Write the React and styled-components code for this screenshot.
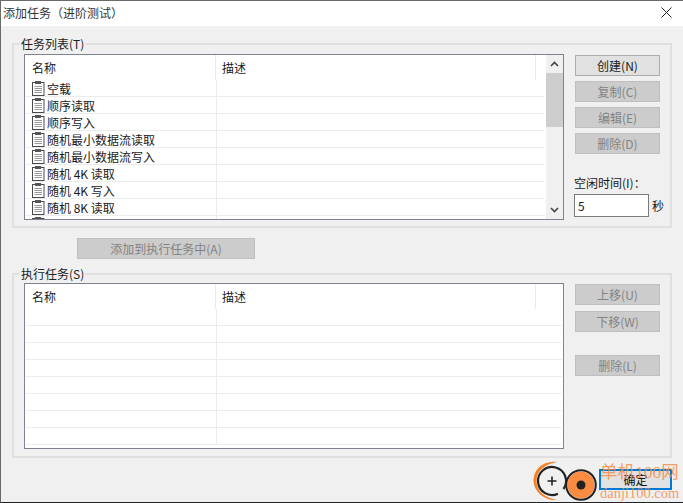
import React from "react";
import styled, { createGlobalStyle } from "styled-components";

const Global = createGlobalStyle`
  html, body { margin: 0; padding: 0; background: #f0f0f0; }
  * { box-sizing: border-box; }
`;

const Dialog = styled.div`
  position: relative;
  width: 683px;
  height: 503px;
  overflow: hidden;
  display: flex;
  flex-direction: column;
  background: #f0f0f0;
  border-top: 1px solid #6a6a6a;
  border-left: 1px solid #6a6a6a;
  border-bottom: 1px solid #222;
  font: 12px/16px "Noto Sans CJK SC", "Liberation Sans", sans-serif;
  color: #1a1a1a;
`;

const TitleBar = styled.div`
  height: 25px;
  flex: none;
  display: flex;
  align-items: center;
  justify-content: space-between;
  padding: 0 11px 2px 2px;
  background: #fff;
  color: #333;
`;

const Body = styled.div`
  flex: 1;
  display: flex;
  flex-direction: column;
  padding: 17px 11px 0 11px;
`;

const Group = styled.section`
  position: relative;
  height: 185px;
  flex: none;
  padding: ${(p) => p.$top}px 0 0 10px;
  border: 2px solid #e0e0e0;
  display: flex;
  gap: 11px;
`;

const Legend = styled.div`
  position: absolute;
  left: 6px;
  top: -9px;
  padding: 0 1px;
  height: 16px;
  background: #f0f0f0;
  color: #222;
`;

const ListBox = styled.div`
  width: 540px;
  height: 166px;
  flex: none;
  display: flex;
  background: #fff;
  border: 1px solid #7f8391;
  overflow: hidden;
`;

const Table = styled.div`
  flex: 1;
  min-width: 0;
  display: flex;
  flex-direction: column;
`;

const HeaderRow = styled.div`
  height: 25px;
  flex: none;
  display: grid;
  grid-template-columns: 191px 320px 1fr;
  line-height: 26px;
`;

const HeaderCell = styled.div`
  padding-left: 7px;
  border-right: 1px solid #eaeaea;
  height: 25px;

  & + & {
    padding-left: 6px;
  }
`;

const Row = styled.div`
  height: 17px;
  flex: none;
  display: grid;
  grid-template-columns: 191px 1fr;
  border-bottom: 1px solid #ececec;
  margin: 0 ${(p) => (p.$wide ? 2 : 1)}px 0 1px;
`;

const NameCell = styled.div`
  display: flex;
  align-items: center;
  gap: 1px;
  padding: 1px 0 0 6px;
  height: 16px;
  border-right: 1px solid #ececec;
  white-space: pre;
`;

const ClipIcon = styled.svg`
  width: 14px;
  height: 15px;
  flex: none;
  margin-top: -1px;
`;

const Scrollbar = styled.div`
  width: 17px;
  flex: none;
  display: flex;
  flex-direction: column;
  background: #f0f0f0;
`;

const ArrowBox = styled.div`
  height: 18px;
  flex: none;
  display: flex;
  align-items: center;
  justify-content: center;
`;

const Thumb = styled.div`
  height: 54px;
  flex: none;
  background: #cdcdcd;
`;

const Spacer = styled.div`
  flex: 1;
`;

const Side = styled.div`
  width: 85px;
  flex: none;
  margin-top: 1px;
  display: flex;
  flex-direction: column;
`;

const Button = styled.button`
  width: ${(p) => p.$w || 85}px;
  height: 21px;
  flex: none;
  padding: 0;
  margin: 0 0 ${(p) => p.$mb ?? 5}px;
  font: inherit;
  line-height: 17px;
  background: ${(p) => (p.disabled ? "#cccccc" : "#e1e1e1")};
  border: 1px solid ${(p) => (p.disabled ? "#bfbfbf" : "#adadad")};
  color: ${(p) => (p.disabled ? "#838383" : "#1a1a1a")};
`;

const IdleLabel = styled.div`
  margin: 16px 0 0 -1px;
  height: 16px;
  white-space: nowrap;
`;

const IdleRow = styled.div`
  display: flex;
  align-items: center;
  gap: 3px;
  margin: 3px 0 0 -1px;
  white-space: nowrap;
`;

const Input = styled.div`
  width: 75px;
  height: 23px;
  background: #fff;
  border: 1px solid #7a7a7a;
  padding: 3px 0 0 3px;
  flex: none;
`;

const AddRow = styled.div`
  height: 45px;
  flex: none;
  padding: 10px 0 0 65px;
`;

const Footer = styled.div`
  flex: 1;
  display: flex;
  justify-content: flex-end;
  padding: 11px 0 0;
`;

const OkButton = styled.button`
  width: 73px;
  height: 21px;
  padding: 0;
  font: inherit;
  line-height: 15px;
  background: #e1e1e1;
  border: 2px solid #0078d7;
  color: #111;
`;

const Watermark = styled.div`
  position: absolute;
  right: 3px;
  top: 462px;
  width: 80px;
  display: flex;
  flex-direction: column;
  gap: 5px;
  font-family: "Liberation Serif", "Noto Sans CJK SC", serif;
  color: rgba(247, 135, 60, 0.8);
  pointer-events: none;
`;

const MarkTitle = styled.div`
  font-size: 17.5px;
  line-height: 18px;
  white-space: nowrap;
`;

const MarkUrl = styled.div`
  font-size: 14.5px;
  line-height: 15px;
  white-space: nowrap;
`;

const LogoMark = styled.svg`
  position: absolute;
  left: 532px;
  top: 460px;
`;

const tasks = [
  "空载",
  "顺序读取",
  "顺序写入",
  "随机最小数据流读取",
  "随机最小数据流写入",
  "随机 4K 读取",
  "随机 4K 写入",
  "随机 8K 读取",
  "",
];

const Clipboard = () => (
  <ClipIcon viewBox="0 0 14 15">
    <rect x="0.5" y="1.5" width="11.5" height="13" fill="#fff" stroke="#4a4a4a" />
    <rect x="3" y="0" width="6" height="3" fill="#555" />
    <path d="M2.5 5.5h7.5M2.5 7.5h7.5M2.5 9.5h7.5M2.5 11.5h7.5" stroke="#9a9a9a" />
  </ClipIcon>
);

const Chevron = ({ up }) => (
  <svg width="9" height="6" viewBox="0 0 9 6">
    <path
      d={up ? "M1 5l3.5-3.5L8 5" : "M1 1l3.5 3.5L8 1"}
      fill="none"
      stroke="#444"
      strokeWidth="1.6"
    />
  </svg>
);

function Header() {
  return (
    <HeaderRow>
      <HeaderCell>名称</HeaderCell>
      <HeaderCell>描述</HeaderCell>
    </HeaderRow>
  );
}

export default function App() {
  return (
    <Dialog>
      <Global />
      <TitleBar>
        <span>添加任务（进阶测试）</span>
        <svg width="11" height="11" viewBox="0 0 11 11">
          <path d="M0.5 0.5l10 10M10.5 0.5l-10 10" stroke="#222" fill="none" />
        </svg>
      </TitleBar>
      <Body>
        <Group $top={9}>
          <Legend>任务列表(T)</Legend>
          <ListBox>
            <Table>
              <Header />
              {tasks.map((t, i) => (
                <Row key={i} $wide>
                  <NameCell>
                    <Clipboard />
                    {t}
                  </NameCell>
                </Row>
              ))}
            </Table>
            <Scrollbar>
              <ArrowBox>
                <Chevron up />
              </ArrowBox>
              <Thumb />
              <Spacer />
              <ArrowBox>
                <Chevron />
              </ArrowBox>
            </Scrollbar>
          </ListBox>
          <Side>
            <Button>创建(N)</Button>
            <Button disabled>复制(C)</Button>
            <Button disabled>编辑(E)</Button>
            <Button disabled>删除(D)</Button>
            <IdleLabel>空闲时间(I)：</IdleLabel>
            <IdleRow>
              <Input>5</Input>秒
            </IdleRow>
          </Side>
        </Group>
        <AddRow>
          <Button disabled $w={178} $mb={0}>
            添加到执行任务中(A)
          </Button>
        </AddRow>
        <Group $top={8}>
          <Legend>执行任务(S)</Legend>
          <ListBox>
            <Table>
              <Header />
              {Array.from({ length: 8 }, (_, i) => (
                <Row key={i}>
                  <NameCell />
                </Row>
              ))}
            </Table>
          </ListBox>
          <Side>
            <Button $mb={6} disabled>上移(U)</Button>
            <Button $mb={23} disabled>下移(W)</Button>
            <Button disabled>删除(L)</Button>
          </Side>
        </Group>
        <Footer>
          <OkButton>确定</OkButton>
        </Footer>
      </Body>
      <LogoMark width="66" height="42" viewBox="0 0 66 42">
        <path
          d="M24 1C10 -1 0 9 0.5 20C1 31 12 40 24 39C13 37 3.5 31 3.5 20C3.5 9 13 3 24 1Z"
          fill="#f5822a"
        />
        <path d="M30.5 28A14 14 0 1 0 24.9 32.7" fill="none" stroke="#222" strokeWidth="2.2" />
        <path d="M14.5 20h9M19 15.5v9" stroke="#222" strokeWidth="1.6" />
        <circle cx="48" cy="24" r="13.5" fill="#f98c41" />
        <circle cx="48" cy="24" r="14.8" fill="none" stroke="#222" strokeWidth="2" />
        <circle cx="48" cy="24" r="4.5" fill="#222" />
      </LogoMark>
      <Watermark>
        <MarkTitle>单机100网</MarkTitle>
        <MarkUrl>danji100.com</MarkUrl>
      </Watermark>
    </Dialog>
  );
}
